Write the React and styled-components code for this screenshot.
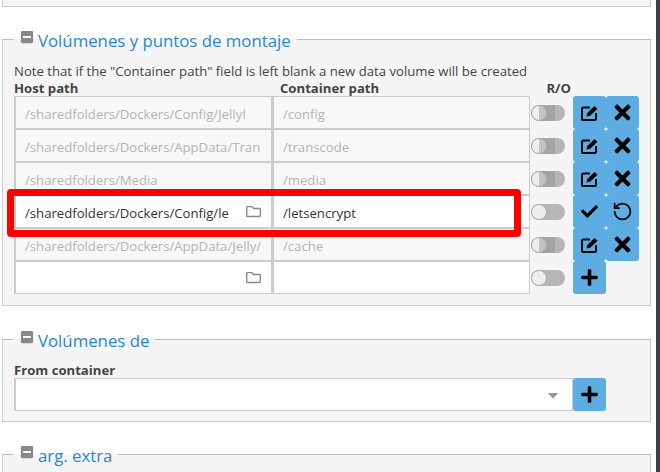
import React from "react";
import styled, { createGlobalStyle } from "styled-components";
import { FaTimes, FaCheck, FaPlus, FaMinusSquare, FaRegFolder, FaCaretDown } from "react-icons/fa";
import { RotateCcw } from "lucide-react";

const GlobalStyle = createGlobalStyle`
  html, body {
    margin: 0;
    height: 472px;
    overflow: hidden;
    background: #fff;
    font-family: "Open Sans", sans-serif;
    color: #444;
  }
`;

const Page = styled.div`
  width: 660px;
  height: 472px;
  overflow: hidden;
  position: relative;
  display: flex;
`;

const Content = styled.div`
  width: 649px;
  margin-left: 2px;
  display: flex;
  flex-direction: column;
`;

const ScrollEdge = styled.div`
  width: 4px;
  margin-left: 5px;
  background: #3a3f48;
`;

const TopPanel = styled.div`
  height: 6px;
  flex: none;
  background: #f5f5f5;
  border: 1px solid #ccc;
  border-top: 0;
  margin-bottom: 21px;
`;

const Section = styled.fieldset`
  margin: 0 0 ${(props) => props.$gap || 0}px;
  padding: 12px 11px ${(props) => props.$bottom || 10}px;
  min-width: 0;
  min-height: ${(props) => props.$minHeight || 0}px;
  flex: none;
  background: #f5f5f5;
  border: 1px solid #ccc;
  border-top-color: #bbb;
`;

const Legend = styled.legend`
  margin-left: -1px;
  padding: 0 6px 0 7px;
  height: 22px;
  display: flex;
  align-items: flex-start;
  gap: 4px;
  font-size: 16.8px;
  color: #2a88c8;
  svg {
    color: #888;
    font-size: 14px;
    margin-top: 2px;
  }
`;

const LegendText = styled.span`
  line-height: 26px;
  height: 22px;
`;

const Note = styled.div`
  font-size: 13.15px;
  line-height: 18px;
  color: #444;
`;

const Heads = styled.div`
  display: grid;
  grid-template-columns: 266px 250px 41px;
  font-size: 13.15px;
  line-height: 16px;
  font-weight: 700;
  color: #444;
`;

const RoHead = styled.span`
  justify-self: end;
`;

const Row = styled.div`
  display: grid;
  grid-template-columns: 258px 258px 43px 33px 33px;
  height: 33px;
`;

const Field = styled.div`
  box-sizing: border-box;
  height: 33px;
  border: 1px solid #ccc;
  border-left-width: 2px;
  background: ${(props) => (props.$active ? "#fff" : "#f8f8f8")};
  color: ${(props) => (props.$active ? "#333" : "#b4b4b4")};
  font-size: 13.15px;
  padding: 2px 10px 0 9px;
  display: flex;
  align-items: center;
  justify-content: space-between;
  overflow: hidden;
`;

const FieldText = styled.span`
  white-space: nowrap;
  overflow: hidden;
  flex: ${(props) => (props.$clip ? `0 0 ${props.$clip}px` : "1")};
`;

const FolderIcon = styled(FaRegFolder)`
  color: #8a8a8a;
  font-size: 15px;
  flex: none;
  margin-top: -2px;
`;

const ToggleCell = styled.div`
  display: flex;
  align-items: center;
  padding-left: 1px;
`;

const Toggle = styled.div`
  width: 34px;
  height: 16px;
  border-radius: 8px;
  background: #b6b6b6;
  position: relative;
  flex: none;
`;

const Fill = styled.span`
  position: absolute;
  left: 8px;
  top: 0;
  width: 16px;
  height: 16px;
  background: #a4a4a4;
`;

const Knob = styled.span`
  position: absolute;
  left: 0;
  top: 0;
  width: 16px;
  height: 16px;
  box-sizing: border-box;
  border-radius: 50%;
  border: 1px solid #aaa;
  background: ${(props) =>
    props.$half ? "linear-gradient(90deg, #eee 50%, #c4c4c4 50%)" : "#eee"};
`;

const Btn = styled.button`
  width: 33px;
  height: 33px;
  padding: 0;
  border: 0;
  border-radius: 3px;
  background: #5dade2;
  color: #000;
  display: flex;
  align-items: center;
  justify-content: center;
`;

const Highlight = styled.div`
  position: absolute;
  left: 7px;
  top: 189px;
  width: 514px;
  height: 48px;
  box-sizing: border-box;
  border: 7px solid #f00;
  border-radius: 4px;
`;

const SelectRow = styled.div`
  display: flex;
`;

const Select = styled.div`
  box-sizing: border-box;
  width: 559px;
  height: 33px;
  background: #fff;
  border: 1px solid #ccc;
  border-left-width: 2px;
  display: flex;
  align-items: center;
  justify-content: flex-end;
  padding-right: 11px;
  color: #999;
  font-size: 16px;
`;

const EditIcon = () => (
  <svg width="17" height="16" viewBox="0 0 17 16">
    <path
      d="M9 2.5H2.5A1.5 1.5 0 0 0 1 4v10a1 1 0 0 0 1 1h12a1 1 0 0 0 1-1V8"
      fill="none"
      stroke="#000"
      strokeWidth="2"
    />
    <path d="M5.5 11.5l.8-3.4L13.5 1l3 2.8-7.4 7z" fill="#000" />
  </svg>
);

const rows = [
  { host: "/sharedfolders/Dockers/Config/Jellyf", path: "/config", half: true, clip: 220 },
  { host: "/sharedfolders/Dockers/AppData/Tran", path: "/transcode", half: true },
  { host: "/sharedfolders/Media", path: "/media", half: true },
  { host: "/sharedfolders/Dockers/Config/le", path: "/letsencrypt", active: true, editing: true, clip: 204 },
  { host: "/sharedfolders/Dockers/AppData/Jelly/", path: "/cache", half: true },
  { host: "", path: "", active: true, adding: true, clip: 204 },
];

const App = () => {
  return (
    <Page>
      <GlobalStyle />
      <Content>
        <TopPanel />
        <Section $gap={22} $bottom={11}>
          <Legend>
            <FaMinusSquare />
            <LegendText>Volúmenes y puntos de montaje</LegendText>
          </Legend>
          <Note>Note that if the "Container path" field is left blank a new data volume will be created</Note>
          <Heads>
            <span>Host path</span>
            <span>Container path</span>
            <RoHead>R/O</RoHead>
          </Heads>
          {rows.map((row, i) => (
            <Row key={i}>
              <Field $active={row.active}>
                <FieldText $clip={row.clip}>{row.host}</FieldText>
                {row.active && <FolderIcon />}
              </Field>
              <Field $active={row.active}>
                <FieldText>{row.path}</FieldText>
              </Field>
              <ToggleCell>
                <Toggle>
                  {row.half && <Fill />}
                  <Knob $half={row.half} />
                </Toggle>
              </ToggleCell>
              <Btn>
                {row.editing ? <FaCheck size={17} /> : row.adding ? <FaPlus size={19} /> : <EditIcon />}
              </Btn>
              {!row.adding && (
                <Btn>
                  {row.editing ? <RotateCcw size={21} strokeWidth={2} /> : <FaTimes size={23} />}
                </Btn>
              )}
            </Row>
          ))}
        </Section>
        <Section $gap={21}>
          <Legend>
            <FaMinusSquare />
            <LegendText>Volúmenes de</LegendText>
          </Legend>
          <Heads>
            <span>From container</span>
          </Heads>
          <SelectRow>
            <Select>
              <FaCaretDown />
            </Select>
            <Btn>
              <FaPlus size={19} />
            </Btn>
          </SelectRow>
        </Section>
        <Section $minHeight={60}>
          <Legend>
            <FaMinusSquare />
            <LegendText>arg. extra</LegendText>
          </Legend>
        </Section>
      </Content>
      <ScrollEdge />
      <Highlight />
    </Page>
  );
};

export default App;
